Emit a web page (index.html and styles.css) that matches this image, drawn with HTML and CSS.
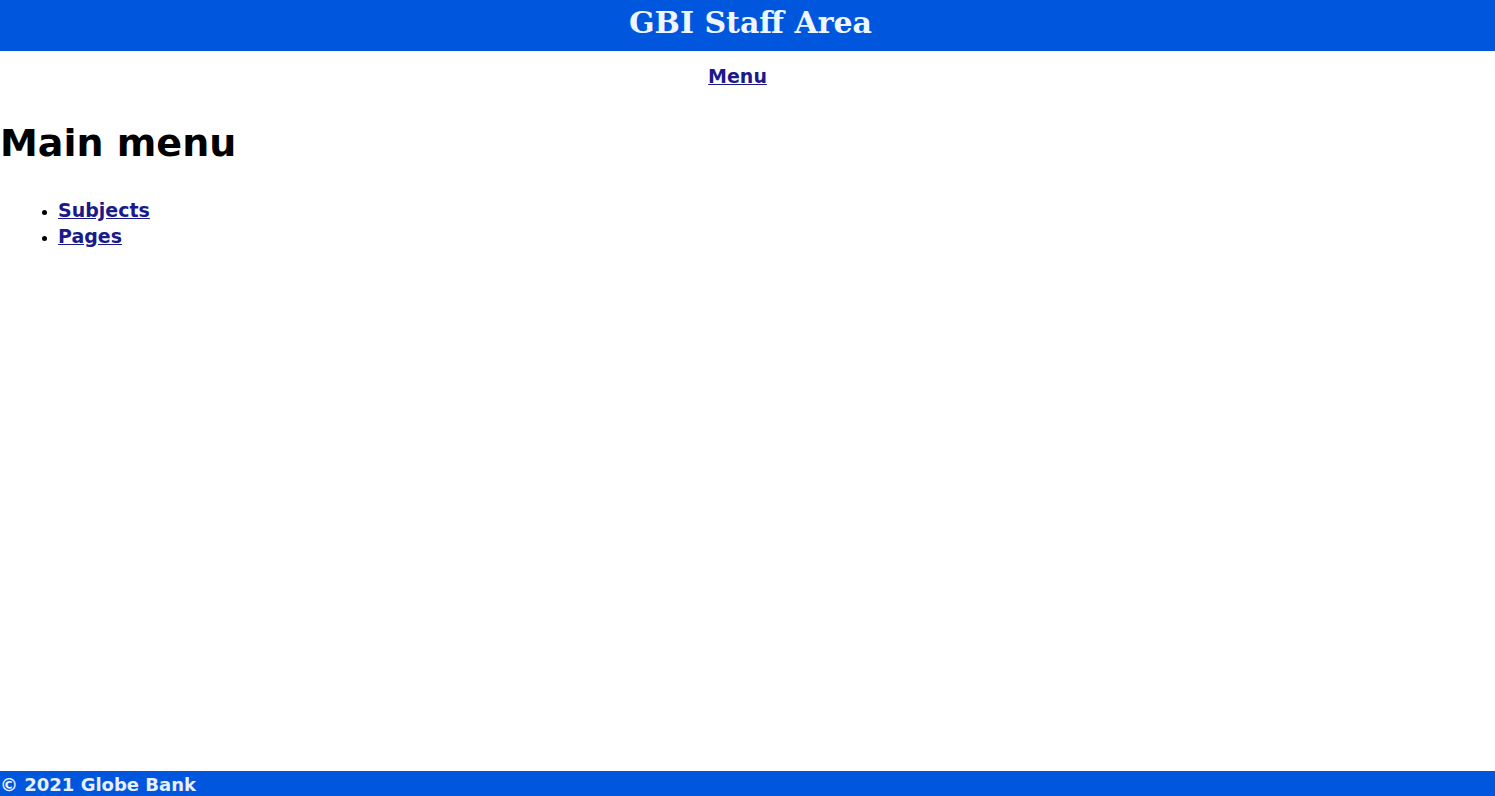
FILE: index.html
```html
<!DOCTYPE html>
<html>
<head>
<meta charset="utf-8">
<title>GBI Staff Area</title>
<link rel="stylesheet" href="styles.css">
</head>
<body>
<header class="site-header">
  <h1 class="site-title">GBI Staff Area</h1>
</header>
<nav class="site-nav">
  <a href="#" class="nav-link">Menu</a>
</nav>
<main class="content">
  <h2 class="page-title">Main menu</h2>
  <ul class="menu-list">
    <li><a href="#" class="menu-link">Subjects</a></li>
    <li><a href="#" class="menu-link">Pages</a></li>
  </ul>
</main>
<footer class="site-footer">&copy; 2021 Globe Bank</footer>
</body>
</html>
```
FILE: styles.css
```css
html, body {
  margin: 0;
  padding: 0;
  height: 100%;
}
body {
  display: flex;
  flex-direction: column;
  font-family: "DejaVu Sans", Verdana, sans-serif;
  background: #fff;
  color: #000;
}
.site-header {
  background: #0057de;
  height: 51px;
  display: flex;
  align-items: center;
  justify-content: center;
}
.site-title {
  margin: 0 0 6px 6px;
  color: #eef6ff;
  font-family: "DejaVu Serif", Georgia, serif;
  font-size: 30px;
  font-weight: bold;
  line-height: 1;
}
.site-nav {
  text-align: center;
  padding-top: 12px;
  padding-right: 20px;
  font-size: 19px;
  line-height: 26px;
}
.nav-link {
  color: #1a1a8a;
  font-weight: bold;
}
.content {
  flex: 1;
}
.page-title {
  margin: 28px 0 0 0;
  font-size: 38px;
  font-weight: bold;
  line-height: 52px;
}
.menu-list {
  margin: 28px 0 0 0;
  padding-left: 58px;
  font-size: 19px;
  line-height: 26px;
}
.menu-list li::marker {
  font-size: 15px;
}
.menu-link {
  color: #1a1a8a;
  font-weight: bold;
}
.site-footer {
  background: #0057de;
  color: #e6f0ff;
  height: 25px;
  font-family: "DejaVu Sans", sans-serif;
  font-weight: bold;
  font-size: 18px;
  line-height: 27px;
  white-space: nowrap;
  overflow: hidden;
}
```
